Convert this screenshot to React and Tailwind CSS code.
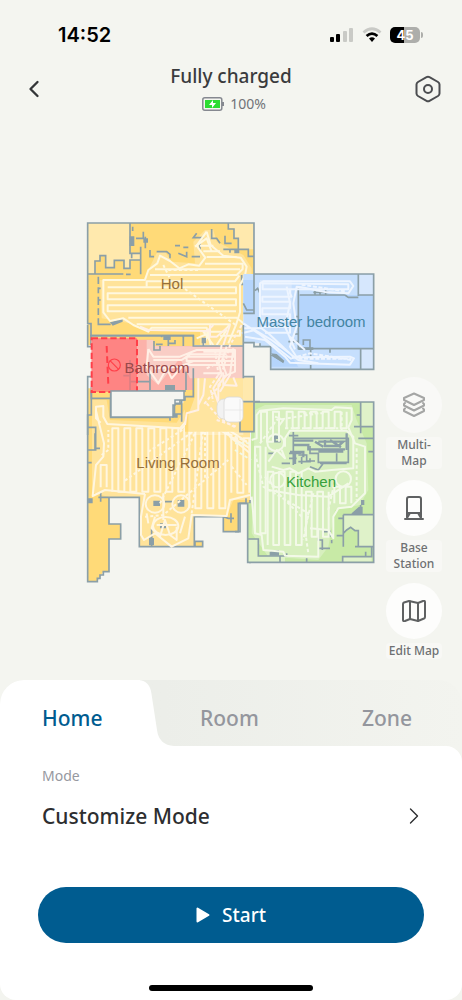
import { ChevronLeft, ChevronRight } from "lucide-react";

// up-and-down cleaning track between two heights
function columns(x0, x1, step, top, bottom) {
  let d = `M${x0} ${bottom}`;
  let up = true;
  for (let x = x0; x <= x1; x += step) {
    d += up ? `V${top}` : `V${bottom}`;
    if (x + step <= x1) d += `h${step}`;
    up = !up;
  }
  return d;
}

// side-to-side cleaning track
function rows(y0, y1, step, left, right) {
  let d = `M${left} ${y0}`;
  let out = true;
  for (let y = y0; y <= y1; y += step) {
    d += out ? `H${right}` : `H${left}`;
    if (y + step <= y1) d += `v${step}`;
    out = !out;
  }
  return d;
}

function HolRoom() {
  return (
    <g transform="translate(80 215) scale(.3333)">
      <path fill="#ffda78" d="M23 24H522V178H490V390H23Z" />
      <path fill="#ffe9ad" d="M23 24H150V115H182V135H150V160H132V136H103V158H77V122H60V136H46V175H23Z" />
      <path fill="#ffe9ad" d="M445 24H522V103H475V70H462V40H445Z" />
      <path fill="#fff" opacity=".25" d="M60 195H190L205 165L232 110H255L275 140L345 145L340 80L375 45H400L410 80L490 120L515 160L510 390H360V345H205L150 325L65 310Z" />
      <path d="M33 390V326H23V24H522V178M23 177H75M150 24V115H182V170M182 135H150V160H132V136H103V158H77V122H60V138H45V177M155 115V130M168 70H190V50M196 65V100M158 35V48M148 178H152M182 178V95M475 103H430M450 113V103H505V124H522M475 103V70H462V42H445V24M495 103H475M55 185V207M55 217V235M55 245V270M55 280V300M55 310V328H92M55 220H62M55 255H62M75 177H130M138 178H150M230 110H260L270 118V130M210 105V125H222M285 92H300M310 97H325M295 115L320 125V110M350 55L340 68H370M395 42V70H410L420 85M435 62V85H455M360 80V105M335 125H360M30 362H340V390M245 362V372H290M310 365V380M485 180V208H505V235H500V295H522" />
      <path fill="#8b9fa7" d="M149 64H163V93H149ZM190 70H204V83H190ZM90 322L128 310V320L98 332ZM463 103H478V115H463Z" />
      <g className="track">
        <path d="M380 50L350 92L376 128L358 152L325 148L298 160L270 138L240 122L232 145L205 165L195 195H70V292L90 318L130 310L160 330L205 350L215 338H380L392 390" />
        <path d="M380 50L392 90L430 122L482 128L500 155L495 182L480 210V292L468 330L445 385" />
        <path d={rows(217, 298, 18, 83, 468)} />
        <path d="M210 180H470L488 162V146H375M200 215V199H465L478 182M225 163H480M370 109H420M360 92H400M380 126H470M145 308H470L490 325M170 328H450L430 350H370L400 390" />
        <path d="M345 95L380 70L395 110M350 370L385 355L370 390M410 390L440 345M420 362H480V345" />
        <path strokeDasharray="9 7" d="M250 150L270 190M315 222L470 332M265 165H360" />
      </g>
    </g>
  );
}

function MasterRoom() {
  return (
    <g transform="translate(235 260) scale(.3333)">
      <path fill="#c6dffd" d="M25 42H416V328H107V260H75V250H25Z" />
      <path fill="#b5d5fc" d="M190 105H416V266H190ZM25 60H57V160H25ZM107 262H150L190 320H107Z" />
      <path fill="#d6e7fd" d="M372 44H416V105H372ZM377 266H416V328H377ZM75 60H170V180H75Z" />
      <path d="M57 42H416V328H107V260H57V248H25M57 42V160M370 42V108M370 105H416M190 80V266H416M194 105H330M377 266V328M25 130L35 150H57V160H25M75 250V262M330 105L340 112H370M235 97H280M240 90V103M255 90V103M272 90V103M180 222H190M190 245H160M205 255V240H225V266M227 266V290M227 315V328M192 170H180M110 285L145 305M285 266V278M60 92L68 85L74 98" />
      <path fill="#8b9fa7" d="M108 280L125 282L148 302L145 310L118 292ZM190 262H235V270H190Z" />
      <g className="track">
        <path d="M75 185V70L85 64H345L355 78L340 100L270 96L200 82L185 80L175 130L185 200L165 260L185 292L345 290L357 295L345 314L165 308L150 290L90 240L30 230" />
        <path d="M83 70V88H340V73ZM165 85V100L170 110H82V125H165V145H82V163H165V182H82V200H165V218H90" />
        <path d="M25 190L70 220L150 282L170 298M25 205H80L100 220L175 290M20 220L60 210L110 240L190 300L250 310M155 80L165 130L150 200L180 268M165 230L210 270" />
        <path strokeDasharray="12 5" d="M190 296H350M200 74L330 94M170 295L225 280L350 300" />
      </g>
    </g>
  );
}

function Bathroom() {
  return (
    <g transform="translate(80 325) scale(.3333)">
      <path fill="#fcb2aa" d="M34 40H340V63H490V160H340V195H34Z" />
      <path fill="#f9cdc5" d="M200 45H235V64H490V160H330L300 100L235 180L200 150Z" />
      <path fill="#ffda78" d="M170 37H340V63H220V44H170ZM315 195H340V160H490V320H315Z" />
      <path fill="#fff" opacity=".3" d="M345 160H490V330H325V270L345 215Z" />
      <path fill="#ffe9ad" d="M490 157H522V230H490Z" />
      <path fill="#ffda78" d="M480 230H522V320H480Z" />
      <path d="M33 32H340V63H490M23 0V65H34M222 48V75H240V63M228 58H248M265 32V63M310 32V63M265 55H285V45M370 40V62M150 105V195M130 152H150M210 145V195M150 170H210M318 140V195M340 130V215H330M340 215H315V225H300V237H283V273H92V198H318M34 198V220H92M23 330V155H34M490 0V160M490 155H522V320H480V230H540" />
      <path fill="#8b9fa7" d="M250 32H272V45H250ZM365 38H378V55H365ZM255 180H285V195H255Z" />
      <g className="track">
        <path d="M205 72L200 125L235 175L260 130L275 160L310 120H465V108H320V95H460V80H370M205 72L220 95H300L350 75H465V140L430 155V180L470 182L460 157M220 105H305L330 88H440M225 130L300 125L340 108M400 0L382 18L205 15L180 5M390 0V35H410L440 10M370 145H430V155" />
        <path d="M355 160V255L320 265L315 300M375 160L370 210L355 240M425 60L415 110L425 150L400 190L415 235M440 65L425 110L440 150L415 180V230M450 0L430 60M460 70L450 150L420 200" />
        <path strokeDasharray="10 7" d="M485 0L450 60L430 130L390 185L400 230M405 75L420 180L370 240M380 235L420 280L470 310M380 130L440 100M410 285L470 305" />
      </g>
    </g>
  );
}

function NoGoZone() {
  return (
    <g transform="translate(80 325) scale(.3333)" stroke="#ff3f49">
      <path fill="#ff7072" fillOpacity=".7" strokeWidth="6" strokeDasharray="19 9" d="M35 40H171V201H35Z" />
      <path strokeWidth="6" strokeDasharray="20 11" d="M80 63L85 180" />
      <circle cx="103" cy="120" r="18" strokeWidth="3.5" />
      <path strokeWidth="3.5" d="M90 107L116 133" />
    </g>
  );
}

function LivingRoom() {
  return (
    <g transform="translate(80 400) scale(.3333)">
      <path fill="#ffda78" d="M23 -35H92V52H283V10H310V-65H490V5H522V90H510V310H475V395H430V350H343V424H368V440H178V292H87V372H122V417H87V515H70L52 543H23Z" />
      <path fill="#fff" opacity=".25" d="M36 0H80L90 60L290 68L320 20L335 -65H430V90H510V300H460L440 350H343V440H178V292H90L36 278Z" />
      <path d="M34 -40V45H23V545H52V535H60V525H70V515H87V417H122V372H87V292H178V440H368V424H345V440M343 440V350H430V395H475V310H510M92 -5V52H270V62M23 82H47V150H23M45 100V145H60M23 188H35M305 -5V65M270 42H305M283 42V10H305M510 300V490M55 292H87M62 278V305M215 385V440M255 305H280M430 350L445 355H462M453 340V368M480 5V92H522" />
      <path fill="#8b9fa7" d="M220 302H240V318H220ZM293 300H313V320H293ZM207 410L222 415V436H207ZM23 295H38V310H23ZM276 42H293V53H276ZM240 370H258V385H240Z" />
      <g className="track">
        <path d="M62 68L48 55V20L70 18V50L82 72L300 85L330 50L340 20L375 0M48 32L72 130L70 170L48 195L38 288L75 270L195 282M195 282L183 350V405L192 420L225 400L275 440L325 415L335 345L440 348L450 300L510 285" />
        <path d={columns(62, 90, 18, 195, 262)} />
        <path d={columns(97, 320, 18, 85, 275)} />
        <path d={columns(328, 445, 18, 55, 325)} />
        <path d={columns(454, 510, 18, 115, 278)} />
        <ellipse cx="225" cy="312" rx="28" ry="26" />
        <ellipse cx="303" cy="312" rx="26" ry="26" />
        <ellipse cx="257" cy="378" rx="38" ry="27" />
        <path d="M225 350L215 385L240 410L255 360L270 405L290 420V380M200 340L205 370M315 350L300 400M250 280V360M230 375H290" />
        <path d="M410 20L430 80L500 125M405 30L420 90L510 145M385 0L395 30L345 50L300 90M420 40L450 110L510 160" />
        <path strokeDasharray="9 7" d="M135 242L400 50M240 310L345 100L385 10M195 350L250 345L445 180M205 155L330 75L400 30M335 340L370 90M420 90L510 130M455 200L500 255M65 165L85 150V90M375 0V240" />
      </g>
    </g>
  );
}

function Kitchen() {
  return (
    <g transform="translate(235 390) scale(.3333)">
      <path fill="#c8eaa6" d="M48 36H416V517H38V340H48Z" />
      <path fill="#fff" opacity=".27" d="M60 60L90 45H350L365 90L395 160L400 300L375 345L300 360L280 470L250 510L100 500L50 430Z" />
      <path fill="#dff2c9" d="M377 38H416V110H377ZM325 374H416V470H370V425L347 412L325 430ZM40 447H70V498H150V517H40ZM323 500H410V515H323Z" />
      <path d="M20 36H416V517H38V340M33 325V340H15V425H0M377 36V130M377 75H365M357 110H416M370 145H416M400 185H416M377 345V372M325 374H416M325 374V470M310 385H325M305 437H325M325 430L335 420L347 412L360 422H370V470H416M360 470H410V500H323V515M392 485V498M38 447H70V498H155V490M135 498V517M215 505V517M175 125V225M162 137H190M162 190H200M162 205H185M120 137V155H137M100 190H120M140 220H165M200 222V200M255 220H335M190 215H225V205M305 190V215M265 220L250 240L225 230M250 420V450H262V480M265 425H285V440M250 475H285M290 450V460" />
      <path strokeWidth="7" d="M175 152H235M175 165H220V178H330M165 186H205V202M250 155H325L310 168H270V150M335 130V180M250 185H325M180 185V222M240 155L265 170M285 150L318 172" />
      <path d="M175 145H340V217H250V190H225V168M190 195H215V213H240" />
      <path fill="#8b9fa7" d="M104 485L118 480H132V497H104ZM350 370L372 350H383V374H350ZM378 330H388V345H378ZM115 136H130V147H115Z" />
      <g className="track">
        <path d="M50 150L65 145V75L75 62L145 55L290 60L300 52L350 55V90L340 112L360 160L390 170V310L350 350L310 355L295 380V445L280 420L225 415M50 320L60 430L80 435L85 480L145 485L150 497L250 500V420" />
        <path d={columns(78, 140, 18, 65, 155)} />
        <path d={columns(155, 345, 18, 65, 115)} />
        <path d="M150 170V145L165 122H335L355 140V235L290 240L240 245L220 235L190 250L165 235L145 240L110 230" />
        <path d={columns(60, 92, 16, 170, 430)} />
        <path d={columns(98, 205, 17, 245, 465)} />
        <path d={columns(213, 290, 17, 305, 440)} />
        <path d={columns(298, 350, 17, 290, 340)} />
        <circle cx="325" cy="267" r="23" />
        <circle cx="128" cy="270" r="22" />
        <circle cx="122" cy="158" r="25" />
        <path d="M100 215L125 180L150 205L140 180M120 80L145 90L130 110M100 300L190 315L280 320L340 280" />
        <path strokeDasharray="10 7" d="M75 160L125 90L250 70M60 190L85 290L220 370L205 450M90 260L130 310L200 380M205 70H270M320 65V120M365 175V330M235 310L210 420L220 490M0 180L48 210M150 115H310M280 360L300 270M0 160H48" />
      </g>
    </g>
  );
}

function FloorPlan() {
  return (
    <svg
      viewBox="0 126 462 554"
      role="img"
      aria-label="Floor map"
      fill="none"
      className="block h-auto w-full [&_.track]:[stroke-linejoin:round] [&_.track]:[stroke-width:6]"
    >
      <g stroke="#8b9fa7" strokeWidth="5" className="[&_path[fill]]:stroke-none">
        <g className="[&_.track]:stroke-[#fff8df]">
          <HolRoom />
        </g>
        <g className="[&_.track]:stroke-[#eef5ff]">
          <MasterRoom />
        </g>
        <g className="[&_.track]:stroke-[#fff6e0]">
          <LivingRoom />
        </g>
        <g className="[&_.track]:stroke-[#f3f9e8]">
          <Kitchen />
        </g>
        <g className="[&_.track]:stroke-[#fff0e6]">
          <Bathroom />
        </g>
      </g>
      <NoGoZone />
      <path fill="#f4f5f0" stroke="#8b9fa7" strokeWidth="1.5" d="M111 391H184V400H175V405H173V417H111Z" />

      {/* robot parked on its dock */}
      <rect x="217" y="399" width="14" height="20" rx="7" fill="#f2f2f2" stroke="#dadada" strokeWidth=".7" />
      <rect x="224" y="397" width="19" height="25" rx="5" fill="#fafafa" stroke="#d8d8d8" strokeWidth=".8" />
      <path stroke="#e6e6e6" d="M225 410H243M240 399V420" strokeWidth=".8" />

      <g fontFamily="'Liberation Sans', Arial, sans-serif" fontSize="15" textAnchor="middle">
        <text x="172" y="289" fill="#966f3a">Hol</text>
        <text x="311" y="327" fill="#4384a2">Master bedroom</text>
        <text x="157" y="373" fill="#98494a">Bathroom</text>
        <text x="178" y="468" fill="#966f3a">Living Room</text>
        <text x="311" y="487" fill="#36a03b">Kitchen</text>
      </g>
    </svg>
  );
}

function LayersIcon() {
  return (
    <svg width="24" height="26" viewBox="0 0 24 26" fill="none" stroke="#a5a6a5" strokeWidth="2" strokeLinejoin="round" strokeLinecap="round">
      <path d="M12 1.5L22 6V8L12 13L2 8V6Z" />
      <path d="M3 11L2 12V13.5L12 18.5L22 13.5V12L21 11" />
      <path d="M3 16.5L2 17.5V19L12 24L22 19V17.5L21 16.5" />
    </svg>
  );
}

function StationIcon() {
  return (
    <svg width="22" height="26" viewBox="0 0 22 26" fill="none" stroke="#5f6162" strokeWidth="2" strokeLinejoin="round" strokeLinecap="round">
      <path d="M4 22V4Q4 2 6 2H16Q18 2 18 4V22" />
      <path d="M2 24H20M4 18H18M7 18L4 23M15 18L18 23" />
    </svg>
  );
}

function EditMapIcon() {
  return (
    <svg width="26" height="24" viewBox="0 0 26 24" fill="none" stroke="#5f6162" strokeWidth="2" strokeLinejoin="round" strokeLinecap="round">
      <path d="M2 5Q2 4 3 3.5L8 2L17 4L22 2Q24 1.5 24 3V18Q24 19 23 19.5L17 22L9 20L4 22Q2 22.5 2 21Z" />
      <path d="M9 2.5V20M17 4V22" />
    </svg>
  );
}

const MAP_ACTIONS = [
  { label: "Multi-Map", lines: ["Multi-", "Map"], icon: <LayersIcon />, muted: true },
  { label: "Base Station", lines: ["Base", "Station"], icon: <StationIcon /> },
  { label: "Edit Map", lines: ["Edit Map"], icon: <EditMapIcon /> },
];

function MapActions() {
  return (
    <div className="absolute right-5 bottom-[21px] flex w-14 flex-col gap-[11px]">
      {MAP_ACTIONS.map((action) => (
        <button key={action.label} type="button" aria-label={action.label} className="flex flex-col items-center gap-1">
          <span className={`flex size-14 items-center justify-center rounded-full ${action.muted ? "bg-[#f9f9f7]" : "bg-[#fdfdfc]"}`}>
            {action.icon}
          </span>
          <span className="w-full rounded bg-[#f8f8f5] text-center text-xs leading-4 font-medium whitespace-nowrap text-[#6e7072]">
            {action.lines.map((line) => (
              <span key={line} className="block">{line}</span>
            ))}
          </span>
        </button>
      ))}
    </div>
  );
}

function StatusBar() {
  return (
    <div className="flex h-[60px] items-center justify-between pt-2.5 pr-[39px] pl-[58px] text-black">
      <span className="font-[Inter,sans-serif] text-xl font-semibold">14:52</span>
      <div className="flex items-center gap-2">
        <svg width="24" height="16" viewBox="0 0 24 16">
          <rect x="0" y="10" width="4" height="5" rx="1" />
          <rect x="6" y="7" width="4" height="8" rx="1" />
          <rect x="13" y="4" width="4" height="11" rx="1" fill="#c9cac6" />
          <rect x="19" y="1" width="4" height="14" rx="1" fill="#c9cac6" />
        </svg>
        <svg width="20" height="16" viewBox="0 0 20 16" fill="none" strokeWidth="2.8">
          <path d="M1.5 5.5Q10-2 18.5 5.5" stroke="#c9cac6" />
          <path d="M4.6 9Q10 4.2 15.4 9" stroke="#000" />
          <path d="M7 11.5Q10 9 13 11.5L10 15Z" fill="#000" />
        </svg>
        <div className="flex items-center">
          <span className="flex h-4 w-[30px] items-center justify-center rounded-[5px] bg-linear-to-r from-black from-45% to-[#adaeab] to-45% font-[Inter,sans-serif] text-[13px] leading-4 font-bold text-white">
            45
          </span>
          <span className="ml-px h-1.5 w-0.5 rounded-r bg-[#adaeab]" />
        </div>
      </div>
    </div>
  );
}

function Header() {
  return (
    <header className="flex h-[66px] items-start justify-between pr-5 pl-5">
      <button type="button" aria-label="Back" className="mt-[15px] flex size-7 items-center justify-center">
        <ChevronLeft size={28} strokeWidth={2} color="#333537" />
      </button>
      <div className="flex flex-col items-center gap-1">
        <h1 className="text-[19px] leading-8 font-medium text-[#3a3b3d]">Fully charged</h1>
        <p className="flex items-center gap-1.5 pl-1.5 text-sm leading-4 text-[#717378]">
          <svg width="22" height="14" viewBox="0 0 22 14" fill="none">
            <rect x=".8" y=".8" width="19" height="12.4" rx="2" stroke="#858890" strokeWidth="1.5" />
            <path d="M21 5V9" stroke="#858890" strokeWidth="2" />
            <rect x="3" y="3" width="15" height="8" fill="#2bdc31" />
            <path d="M11 3L7 8H10V11L14 6H11Z" fill="#fff" />
          </svg>
          100%
        </p>
      </div>
      <button type="button" aria-label="Settings" className="mt-[15px] flex size-7 items-center justify-center">
        <svg width="28" height="28" viewBox="0 0 28 28" fill="none" stroke="#4b4d50" strokeWidth="2" strokeLinejoin="round">
          <path d="M12.5 2.2Q14 1.3 15.5 2.2L24 7Q25.5 8 25.5 9.5V18.5Q25.5 20 24 21L15.5 25.8Q14 26.7 12.5 25.8L4 21Q2.5 20 2.5 18.5V9.5Q2.5 8 4 7Z" />
          <circle cx="14" cy="14" r="4" />
        </svg>
      </button>
    </header>
  );
}

function CleaningTabs() {
  return (
    <div role="tablist" className="flex h-[66px] rounded-t-3xl bg-linear-to-r from-[#eceee9] from-35% to-[#f3f4ef] text-[21px] font-medium">
      <button role="tab" type="button" aria-selected="true" className="relative w-[140px] rounded-tl-3xl bg-white pt-3 pl-[42px] text-left text-[#005c90]">
        Home
        <svg width="36" height="66" viewBox="0 0 36 66" className="absolute top-0 left-full -ml-px" aria-hidden="true">
          <path fill="#fff" d="M0 0Q11 1 12.5 14L18 50Q20 65 35 66H0Z" />
        </svg>
      </button>
      <div className="flex flex-1 justify-between pt-3 pr-[50px] pl-[60px] text-[#94969d]">
        <button role="tab" type="button" aria-selected="false">Room</button>
        <button role="tab" type="button" aria-selected="false">Zone</button>
      </div>
    </div>
  );
}

export default function App() {
  return (
    <div className="flex min-h-screen flex-col bg-[#f4f5f0] font-['Noto_Sans','Open_Sans',sans-serif]">
      <StatusBar />
      <Header />
      <main className="relative">
        <FloorPlan />
        <MapActions />
      </main>
      <section className="flex flex-1 flex-col">
        <CleaningTabs />
        <div className="flex flex-1 flex-col bg-[#f3f4ef]">
          <div className="flex flex-1 flex-col rounded-tr-2xl rounded-b-2xl bg-white px-[38px] pt-5">
            <p className="pl-1 text-sm leading-5 text-[#9698a0]">Mode</p>
            <button type="button" className="mt-4 flex items-center justify-between pl-1 text-[21px] leading-7 font-medium text-[#2d2e30]">
              Customize Mode
              <ChevronRight size={28} strokeWidth={1.2} className="-mr-1" />
            </button>
            <button type="button" className="mt-[57px] flex h-14 items-center justify-center gap-3 rounded-full bg-[#005c90] text-[19px] font-medium text-white">
              <svg width="14" height="16" viewBox="0 0 14 16" fill="#fff" stroke="#fff" strokeWidth="2" strokeLinejoin="round">
                <path d="M1.5 1.5V14.5L12.5 8Z" />
              </svg>
              Start
            </button>
            <div className="mx-auto mt-auto mb-[9px] h-1.5 w-[164px] rounded-full bg-black" />
          </div>
        </div>
      </section>
    </div>
  );
}
